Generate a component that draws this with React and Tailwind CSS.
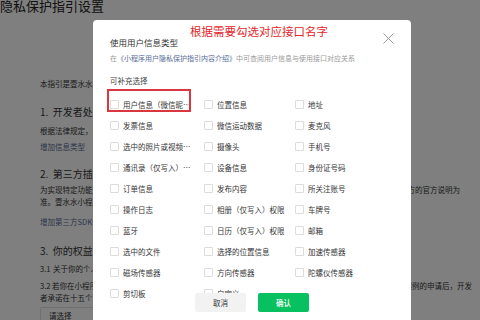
const rows = [
  ["用户信息（微信昵称、头像）", "位置信息", "地址"],
  ["发票信息", "微信运动数据", "麦克风"],
  ["选中的照片或视频信息", "摄像头", "手机号"],
  ["通讯录（仅写入）权限", "设备信息", "身份证号码"],
  ["订单信息", "发布内容", "所关注账号"],
  ["操作日志", "相册（仅写入）权限", "车牌号"],
  ["蓝牙", "日历（仅写入）权限", "邮箱"],
  ["选中的文件", "选择的位置信息", "加速传感器"],
  ["磁场传感器", "方向传感器", "陀螺仪传感器"],
  ["剪切板", "自定义", ""],
];

const Check = ({ label }) => {
  if (!label) return <div className="h-[21px]" />;
  return (
    <label className="flex h-[21px] items-center gap-[4px]">
      <span className="h-[9px] w-[9px] shrink-0 rounded-[1px] border border-[#dcdcdc] bg-white" />
      <span className="max-w-[69px] truncate text-[7.5px] leading-[12px] text-[#353535]">
        {label}
      </span>
    </label>
  );
};

export default function App() {
  return (
    <div className="relative h-[320px] w-[480px] overflow-hidden bg-white font-['Noto_Sans_CJK_SC','Noto_Sans',sans-serif] text-[#333]">
      {/* page behind the dialog */}
      <div className="flex flex-col whitespace-nowrap">
        <div className="mt-[-1px] text-[13px] leading-[13px] text-[#222]">隐私保护指引设置</div>
        <div className="flex flex-col pl-[40px] text-[7.5px] leading-[12px]">
          <p className="mt-[66px]">本指引是壹水水小程序开发者为处理你的个人信息而制定。</p>
          <h3 className="mt-[15px] text-[10px] leading-[14px]">1.&nbsp;&nbsp;开发者处理的信息</h3>
          <p className="mt-[6px]">根据法律规定，开发者仅处理实现小程序功能所必要的信息。</p>
          <a className="mt-[4px] text-[#576b95]">增加信息类型</a>
          <h3 className="mt-[14px] text-[10px] leading-[14px]">2.&nbsp;&nbsp;第三方插件信息</h3>
          <p className="mt-[3px]">
            为实现特定功能，开发者可能会接入第三方提供的插件。第三方插件的个人信息处理规则，请以第三方插件提供方的官方说明为
          </p>
          <p>准。壹水水小程序已接入的第三方插件信息如下。</p>
          <a className="mt-[8px] text-[#576b95]">增加第三方SDK信息</a>
          <h3 className="mt-[16px] text-[10px] leading-[14px]">3.&nbsp;&nbsp;你的权益</h3>
          <p className="mt-[5px]">
            <span className="inline-block w-[13px]">3.1</span>关于你的个人信息，你可以通过以下方式与开发者联系，行使查阅、复制、更正、删除等法定权利。
          </p>
          <p className="mt-[5px]">
            <span className="inline-block w-[12px]">3.2</span>若你在小程序中需要撤回授权、删除或注销个人信息，可以通过小程序内的设置页面联系开发者并提交相关案例的申请后，开发
          </p>
          <p>者承诺在十五个工作日内完成核查和处理，并按照法律法规要求处理你的相关信息。</p>
          <div className="mt-[3px] flex h-[18px] w-[120px] items-center rounded-[2px] border border-[#e0e0e0] pl-[8px]">
            请选择
          </div>
        </div>
      </div>

      {/* mask */}
      <div className="absolute inset-0 bg-black/50" />

      {/* dialog */}
      <div className="absolute left-[93px] top-[20px] h-[320px] w-[318px] rounded-[4px] bg-white pl-[17px]">
        <button className="absolute right-[17px] top-[13px] h-[11px] w-[11px]">
          <svg viewBox="0 0 11 11" className="h-[11px] w-[11px]" fill="none" stroke="#9a9a9a" strokeWidth="1">
            <path d="M0.5 0.5L10.5 10.5M10.5 0.5L0.5 10.5" />
          </svg>
        </button>
        <div className="pt-[16px] text-[8.5px] leading-[12px] text-[#333]">使用用户信息类型</div>
        <div className="mt-[5px] text-[7px] leading-[10px] text-[#9a9a9a]">
          在<span className="text-[#576b95]">《小程序用户隐私保护指引内容介绍》</span>中可查阅用户信息与使用接口对应关系
        </div>
        <div className="mt-[12px] text-[7.5px] leading-[12px] text-[#444]">可补充选择</div>
        <div className="mt-[7px] grid grid-cols-[94px_91px_91px]">
          {rows.map((row, i) => row.map((label, j) => <Check key={`${i}-${j}`} label={label} />))}
        </div>

        {/* footer */}
        <div className="absolute left-0 right-0 top-[273px] flex justify-center gap-[12px]">
          <button className="h-[19px] w-[51px] rounded-[2px] bg-[#f2f2f2] text-[7.5px] text-[#333]">取消</button>
          <button className="h-[19px] w-[51px] rounded-[2px] bg-[#07c160] text-[7.5px] font-medium text-white">
            确认
          </button>
        </div>
      </div>

      {/* annotation */}
      <div className="absolute left-[190px] top-[24px] text-[11.5px] leading-[14px] text-[#e3262a]">
        根据需要勾选对应接口名字
      </div>
      <div className="absolute left-[107px] top-[89px] h-[23px] w-[84px] border-2 border-[#d9363e]" />
    </div>
  );
}
